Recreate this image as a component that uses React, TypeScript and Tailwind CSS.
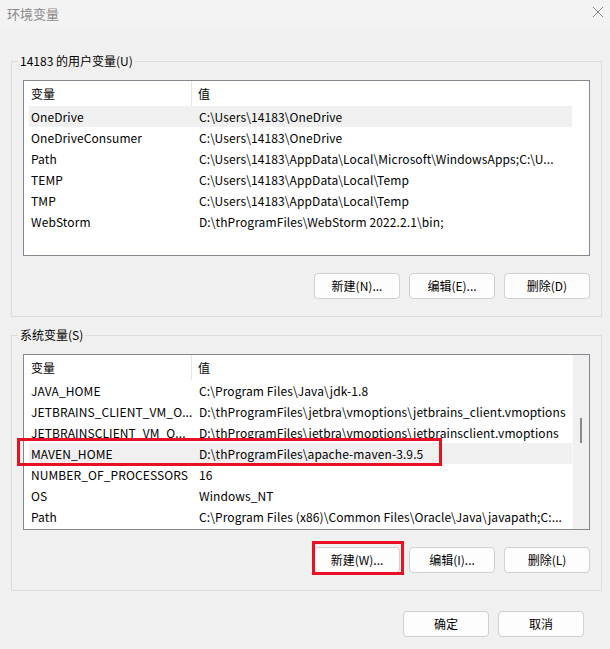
import React from "react";

type Row = [string, string];

const userRows: Row[] = [
  ["OneDrive", "C:\\Users\\14183\\OneDrive"],
  ["OneDriveConsumer", "C:\\Users\\14183\\OneDrive"],
  ["Path", "C:\\Users\\14183\\AppData\\Local\\Microsoft\\WindowsApps;C:\\U..."],
  ["TEMP", "C:\\Users\\14183\\AppData\\Local\\Temp"],
  ["TMP", "C:\\Users\\14183\\AppData\\Local\\Temp"],
  ["WebStorm", "D:\\thProgramFiles\\WebStorm 2022.2.1\\bin;"],
];

const sysRows: Row[] = [
  ["JAVA_HOME", "C:\\Program Files\\Java\\jdk-1.8"],
  ["JETBRAINS_CLIENT_VM_O...", "D:\\thProgramFiles\\jetbra\\vmoptions\\jetbrains_client.vmoptions"],
  ["JETBRAINSCLIENT_VM_O...", "D:\\thProgramFiles\\jetbra\\vmoptions\\jetbrainsclient.vmoptions"],
  ["MAVEN_HOME", "D:\\thProgramFiles\\apache-maven-3.9.5"],
  ["NUMBER_OF_PROCESSORS", "16"],
  ["OS", "Windows_NT"],
  ["Path", "C:\\Program Files (x86)\\Common Files\\Oracle\\Java\\javapath;C:..."],
];

function Btn({ label, children }: { label: string; children?: React.ReactNode }) {
  return (
    <div className="relative">
      <button className="w-[86px] h-[26px] rounded-[4px] border border-[#d0d0d0] bg-[#fdfdfd] text-[12px] text-black flex items-center justify-center leading-none">
        {label}
      </button>
      {children}
    </div>
  );
}

function List({
  rows,
  selected,
  scroll,
  children,
}: {
  rows: Row[];
  selected: number;
  scroll?: boolean;
  children?: React.ReactNode;
}) {
  return (
    <div className="relative h-[176px] border border-[#828790] bg-white flex">
      <div className="flex-1 flex flex-col">
        <div className="h-[25px] flex items-center text-[12px] text-black">
          <div className="w-[168px] h-full pl-[7px] flex items-center border-r border-[#e5e5e5]">变量</div>
          <div className="flex-1 pl-[6px] h-full flex items-center">值</div>
        </div>
        <div className="flex flex-col pl-[5px]">
          {rows.map((r, i) => (
            <div
              key={i}
              className={`h-[21px] flex items-center text-[12px] text-black whitespace-nowrap tracking-[0.1px] ${
                i === selected ? "bg-[#f0f0f0]" : ""
              }`}
            >
              <div className="w-[170px] pl-[2px] overflow-hidden">{r[0]}</div>
              <div className="flex-1 overflow-hidden">{r[1]}</div>
            </div>
          ))}
        </div>
      </div>
      {scroll ? (
        <div className="w-[17px] bg-[#f0f0f0] relative border-l border-[#fafafa]">
          <div className="absolute left-[7px] top-[63px] w-[2px] h-[25px] bg-[#8a8a8a]" />
        </div>
      ) : (
        <div className="w-[17px] bg-white" />
      )}
      {children}
    </div>
  );
}

function Group({
  label,
  children,
  className,
}: {
  label: string;
  children: React.ReactNode;
  className?: string;
}) {
  return (
    <div className={`relative ml-[11px] mr-[8px] border border-[#dcdcdc] pt-[18px] px-[11px] pb-[17px] ${className ?? ""}`}>
      <div className="absolute left-[6px] top-[-9px] px-[2px] bg-[#f0f0f0] text-[12px] leading-[16px] text-black">
        {label}
      </div>
      {children}
    </div>
  );
}

export default function App() {
  return (
    <div
      className="w-[610px] h-[649px] bg-[#f0f0f0] flex flex-col overflow-hidden"
      style={{ fontFamily: '"Noto Sans CJK SC", "Noto Sans", sans-serif' }}
    >
      <div className="h-[27px] bg-[#f3f3f3] flex items-center justify-between pl-[7px] pr-[6px]">
        <span className="text-[13px] text-[#8a8a8a]">环境变量</span>
        <svg width="12" height="12" viewBox="0 0 12 12" className="mt-[-4px]">
          <path d="M1 1 L11 11 M11 1 L1 11" stroke="#8a8a8a" strokeWidth="1" />
        </svg>
      </div>

      <Group label="14183 的用户变量(U)" className="mt-[34px]">
        <List rows={userRows} selected={0} />
        <div className="mt-[17px] flex justify-end gap-[9px]">
          <Btn label="新建(N)..." />
          <Btn label="编辑(E)..." />
          <Btn label="删除(D)" />
        </div>
      </Group>

      <Group label="系统变量(S)" className="mt-[18px]">
        <List rows={sysRows} selected={3} scroll>
          <div className="absolute left-[-7px] top-[83px] w-[425px] h-[28px] border-[3px] border-[#e81123]" />
        </List>
        <div className="mt-[17px] flex justify-end gap-[9px]">
          <Btn label="新建(W)...">
            <div className="absolute left-[-2px] top-[-6px] w-[92px] h-[34px] border-[3px] border-[#e81123]" />
          </Btn>
          <Btn label="编辑(I)..." />
          <Btn label="删除(L)" />
        </div>
      </Group>

      <div className="mt-[20px] flex justify-end gap-[9px] pr-[26px]">
        <Btn label="确定" />
        <Btn label="取消" />
      </div>
    </div>
  );
}
